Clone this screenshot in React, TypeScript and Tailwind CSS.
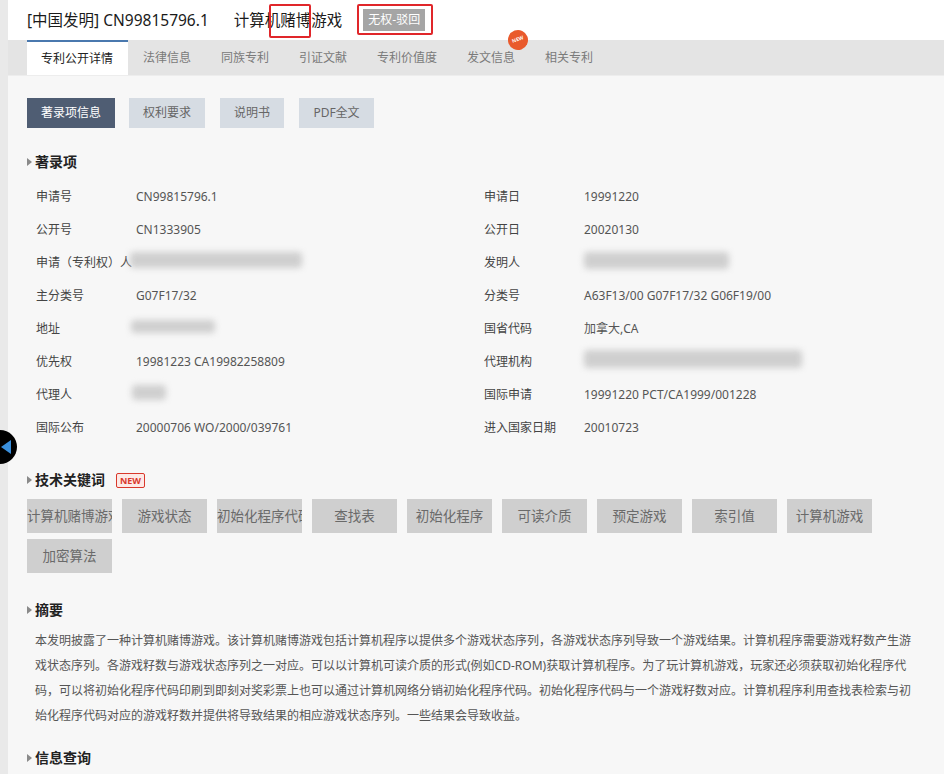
import React from "react";

const FONT = "font-['Noto_Sans','Noto_Sans_CJK_SC',sans-serif]";

function Heading({ children, extra }: { children: React.ReactNode; extra?: React.ReactNode }) {
  return (
    <div className="flex items-center h-5">
      <span className="w-0 h-0 border-y-[4px] border-y-transparent border-l-[5px] border-l-[#8a8a8a] mr-[3px]" />
      <span className="text-[14px] font-bold text-[#222] leading-5">{children}</span>
      {extra}
    </div>
  );
}

function Blur({ w, h = 14 }: { w: number; h?: number }) {
  return (
    <span
      className="inline-block bg-[#cfcfcf] blur-[3px] rounded-sm"
      style={{ width: w, height: h }}
    />
  );
}

const rows: [string, React.ReactNode, string, React.ReactNode][] = [
  ["申请号", "CN99815796.1", "申请日", "19991220"],
  ["公开号", "CN1333905", "公开日", "20020130"],
  ["申请（专利权）人", <span className="-ml-[6px]"><Blur w={172} h={16} /></span>, "发明人", <Blur w={145} h={17} />],
  ["主分类号", "G07F17/32", "分类号", "A63F13/00 G07F17/32 G06F19/00"],
  ["地址", <span className="-ml-[5px]"><Blur w={84} h={13} /></span>, "国省代码", "加拿大,CA"],
  ["优先权", "19981223 CA19982258809", "代理机构", <Blur w={218} h={18} />],
  ["代理人", <span className="-ml-[4px]"><Blur w={34} h={15} /></span>, "国际申请", "19991220 PCT/CA1999/001228"],
  ["国际公布", "20000706 WO/2000/039761", "进入国家日期", "20010723"],
];

const keywords = [
  "计算机赌博游戏",
  "游戏状态",
  "初始化程序代码",
  "查找表",
  "初始化程序",
  "可读介质",
  "预定游戏",
  "索引值",
  "计算机游戏",
  "加密算法",
];

const abstractLines = [
  "本发明披露了一种计算机赌博游戏。该计算机赌博游戏包括计算机程序以提供多个游戏状态序列，各游戏状态序列导致一个游戏结果。计算机程序需要游戏籽数产生游",
  "戏状态序列。各游戏籽数与游戏状态序列之一对应。可以以计算机可读介质的形式(例如CD-ROM)获取计算机程序。为了玩计算机游戏，玩家还必须获取初始化程序代",
  "码，可以将初始化程序代码印刷到即刻对奖彩票上也可以通过计算机网络分销初始化程序代码。初始化程序代码与一个游戏籽数对应。计算机程序利用查找表检索与初",
  "始化程序代码对应的游戏籽数并提供将导致结果的相应游戏状态序列。一些结果会导致收益。",
];

const tabs = ["专利公开详情", "法律信息", "同族专利", "引证文献", "专利价值度", "发文信息", "相关专利"];

export default function App() {
  return (
    <div className={`${FONT} relative w-[944px] h-[774px] overflow-hidden flex bg-[#f7f7f7]`}>
      <div className="w-2 shrink-0 bg-[#e9e9e9]" />
      <div className="flex-1 flex flex-col min-w-0">
        {/* header */}
        <div className="h-10 bg-white flex items-center pl-[19px] shrink-0">
          <span className="text-[15.5px] text-[#1a1a1a] leading-5 whitespace-nowrap">[中国发明] CN99815796.1</span>
          <span className="relative inline-block ml-[25px] text-[15.5px] text-[#1a1a1a] leading-5 whitespace-nowrap">
            计算机赌博游戏
            <span className="absolute left-[35px] top-[-6px] w-[42px] h-[34px] border-2 border-[#e0262a] rounded-[2px]" />
          </span>
          <span className="relative ml-[21px]">
            <span className="flex items-center justify-center w-[62px] h-[22px] bg-[#a5a5a5] text-white text-[12px] leading-none">无权-驳回</span>
            <span className="absolute left-[-6px] top-[-5px] w-[76px] h-[31px] border-2 border-[#e0262a] rounded-[2px]" />
          </span>
        </div>
        {/* tabs */}
        <div className="h-9 bg-[#e4e4e4] flex pl-[19px] shrink-0 border-b border-[#ededed]">
          {tabs.map((t, i) => (
            <div
              key={t}
              className={
                i === 0
                  ? "relative flex items-center px-[14px] pr-[15px] bg-white border-t-2 border-[#4a78ae] text-[12px] text-[#222]"
                  : "relative flex items-center px-[15px] text-[12px] text-[#7a7a7a]"
              }
            >
              {t}
              {t === "发文信息" && (
                <span className="absolute left-[56px] top-[-10px] w-[20px] h-[20px] rounded-full bg-[#e95a2c] flex items-center justify-center text-white text-[5px] font-bold rotate-[-20deg]">
                  NEW
                </span>
              )}
            </div>
          ))}
        </div>
        {/* content */}
        <div className="pl-[19px] pt-[22px] flex flex-col">
          <div className="flex h-[30px] text-[12px]">
            <div className="w-[88px] bg-[#4f5d73] text-white flex items-center justify-center">著录项信息</div>
            <div className="ml-[14px] w-[76px] bg-[#d6dce3] text-[#666] flex items-center justify-center">权利要求</div>
            <div className="ml-[15px] w-[64px] bg-[#d6dce3] text-[#666] flex items-center justify-center">说明书</div>
            <div className="ml-[15px] w-[75px] bg-[#d6dce3] text-[#666] flex items-center justify-center">PDF全文</div>
          </div>

          <div className="mt-[24px]">
            <Heading>著录项</Heading>
          </div>

          <div className="mt-[8px] pl-[9px] grid grid-cols-[448px_1fr]">
            {rows.map(([l1, v1, l2, v2], i) => (
              <React.Fragment key={i}>
                <div className="h-[33px] flex items-center text-[12px]">
                  <span className="w-[100px] shrink-0 text-[#444] whitespace-nowrap">{l1}</span>
                  <span className="text-[#555] whitespace-nowrap">{v1}</span>
                </div>
                <div className="h-[33px] flex items-center text-[12px]">
                  <span className="w-[100px] shrink-0 text-[#444] whitespace-nowrap">{l2}</span>
                  <span className="text-[#555] whitespace-nowrap">{v2}</span>
                </div>
              </React.Fragment>
            ))}
          </div>

          <div className="mt-[26px]">
            <Heading
              extra={
                <span className="ml-[11px] h-[15px] px-[3px] border border-[#d9382b] bg-[#fde9e6] rounded-[2px] text-[#d9382b] text-[9px] font-bold leading-[13px]">
                  NEW
                </span>
              }
            >
              技术关键词
            </Heading>
          </div>

          <div className="mt-[9px] flex flex-wrap gap-x-[10px] gap-y-[6px] w-[880px]">
            {keywords.map((k) => (
              <div
                key={k}
                className="w-[85px] h-[34px] bg-[#cfcfcf] text-[#6a6a6a] text-[13.5px] leading-[34px] text-center whitespace-nowrap overflow-hidden"
              >
                {k}
              </div>
            ))}
          </div>

          <div className="mt-[27px]">
            <Heading>摘要</Heading>
          </div>
          <div className="mt-[8px] pl-[8px] text-[12px] text-[#555] leading-[25px]">
            {abstractLines.map((l, i) => (
              <div key={i} className="whitespace-nowrap">{l}</div>
            ))}
          </div>

          <div className="mt-[20px]">
            <Heading>信息查询</Heading>
          </div>
        </div>
      </div>
      {/* side toggle */}
      <div className="absolute left-[-17px] top-[430px] w-[34px] h-[34px] rounded-full bg-black flex items-center justify-end pr-[6px]">
        <span className="w-0 h-0 border-y-[7px] border-y-transparent border-r-[10px] border-r-[#3a8fdc]" />
      </div>
    </div>
  );
}
